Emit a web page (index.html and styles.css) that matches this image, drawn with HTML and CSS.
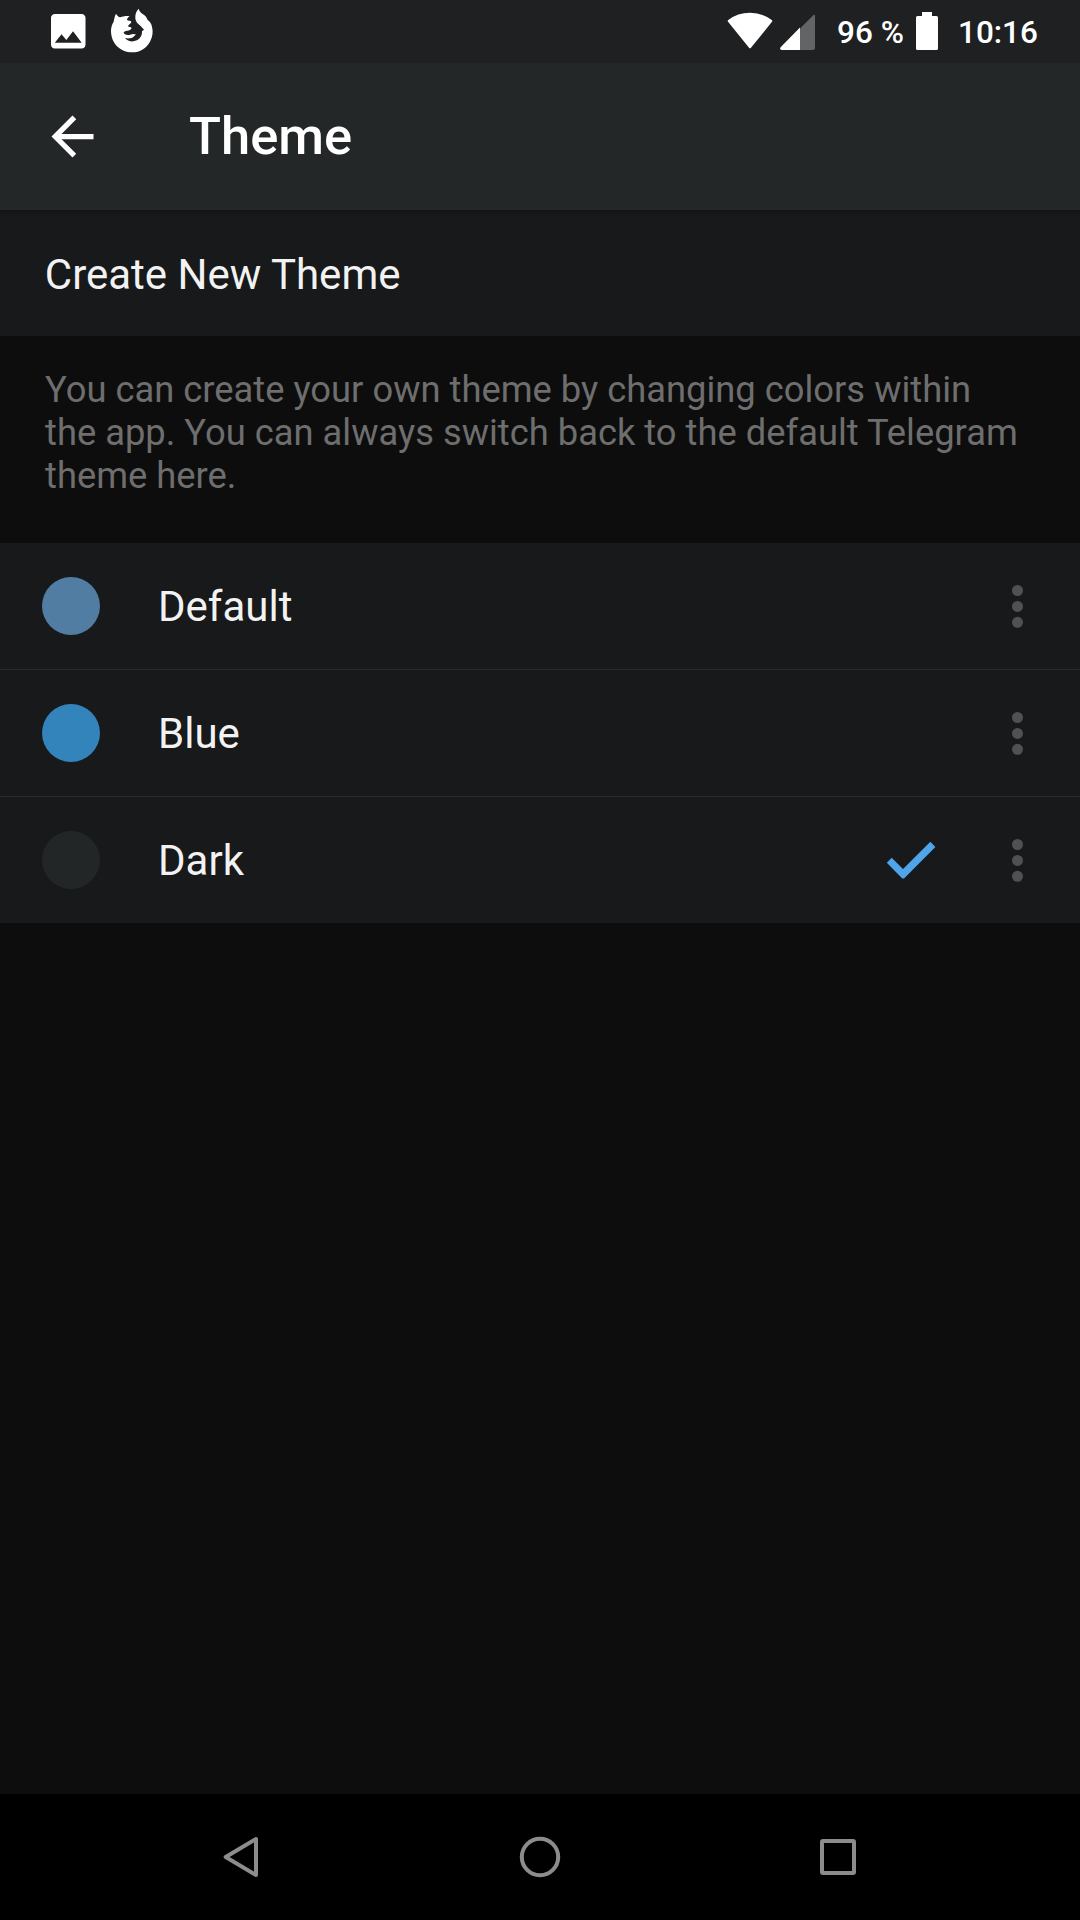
FILE: index.html
```html
<!DOCTYPE html>
<html lang="en">
<head>
<meta charset="utf-8">
<title>Theme</title>
<link rel="stylesheet" href="styles.css">
</head>
<body>
<div class="screen">
  <div class="status-bar">
    <div class="notifications">
      <svg class="icon-image" viewBox="3 3 18 18"><path d="M21 19V5c0-1.100-.9-2-2-2H5c-1.100 0-2 .9-2 2v14c0 1.100.9 2 2 2h14c1.100 0 2-.9 2-2zM8.500 13.500l2.500 3.010L14.500 12l4.500 6H5l3.500-4.500z"/></svg>
      <svg class="icon-firefox" viewBox="210 24 132 135"><path d="M228 41C231 46 235 51 241 52C248 50 258 47 269 49C264 52 261 56 261 60C265 63 272 62 274 65C274 70 266 74 264 78C265 82 273 80 275 84C273 89 268 92 262 92C256 92 250 95 251 99C254 104 262 106 270 104C277 102 284 101 288 104C282 107 281 112 274 114C267 116 261 116 255 114C261 121 270 125 280 124C296 122 307 110 306 94L312 89L304 80C302 78 299 75 295 72C288 67 285 58 286 48C287 38 291 31 296 26C298 33 302 38 308 42C316 46 320 53 323 60C331 66 335 73 336 81C340 95 338 111 330 125C319 145 300 157 277 157C240 157 213 129 213 93C213 82 216 72 221 65C223 56 224 48 228 41Z"/></svg>
    </div>
    <div class="system">
      <svg class="icon-wifi" viewBox="0 0 46 37"><path d="M23 35L2 9Q11 2 23 2T44 9Z"/></svg>
      <svg class="icon-signal" viewBox="0 0 36 36"><path class="signal-off" d="M20 14.500L33 1.500Q35 0 35 2V34Q35 36 33 36H20Z"/><path d="M20 13.500V36H1.500Q-1 35 .8 33Z"/></svg>
      <span class="battery-level">96 %</span>
      <svg class="icon-battery" viewBox="0 0 22 38"><path d="M6 0H16V4H20.500Q22 4 22 5.500V36.500Q22 38 20.500 38H1.500Q0 38 0 36.500V5.500Q0 4 1.500 4H6Z"/></svg>
      <span class="clock">10:16</span>
    </div>
  </div>
  <header class="app-bar">
    <svg class="icon-back" viewBox="0 0 24 24"><path d="M20 11H7.830l5.590-5.590L12 4l-8 8 8 8 1.410-1.410L7.830 13H20v-2z"/></svg>
    <h1 class="title">Theme</h1>
  </header>
  <main class="content">
    <div class="create-row">Create New Theme</div>
    <p class="info">You can create your own theme by changing colors within the app. You can always switch back to the default Telegram theme here.</p>
    <div class="theme-list">
      <div class="theme-row">
        <span class="swatch swatch-default"></span>
        <span class="theme-name">Default</span>
        <svg class="icon-more" viewBox="0 0 11 43"><circle cx="5.500" cy="5.500" r="5.500"/><circle cx="5.500" cy="21.400" r="5.500"/><circle cx="5.500" cy="37.300" r="5.500"/></svg>
      </div>
      <div class="theme-row">
        <span class="swatch swatch-blue"></span>
        <span class="theme-name">Blue</span>
        <svg class="icon-more" viewBox="0 0 11 43"><circle cx="5.500" cy="5.500" r="5.500"/><circle cx="5.500" cy="21.400" r="5.500"/><circle cx="5.500" cy="37.300" r="5.500"/></svg>
      </div>
      <div class="theme-row">
        <span class="swatch swatch-dark"></span>
        <span class="theme-name">Dark</span>
        <svg class="icon-check" viewBox="0 0 48 37"><path d="M-.2 20.700L4.700 15.800L16 27L43.300-.2L48.400 4.900L17 36.600H15.300Z"/></svg>
        <svg class="icon-more" viewBox="0 0 11 43"><circle cx="5.500" cy="5.500" r="5.500"/><circle cx="5.500" cy="21.400" r="5.500"/><circle cx="5.500" cy="37.300" r="5.500"/></svg>
      </div>
    </div>
  </main>
  <nav class="nav-bar">
    <svg class="nav-icon" viewBox="0 0 48 48"><path d="M7.700 24L38 6V42Z"/></svg>
    <svg class="nav-icon" viewBox="0 0 48 48"><circle cx="24" cy="24" r="18.200"/></svg>
    <svg class="nav-icon" viewBox="0 0 48 48"><rect x="8" y="8" width="32" height="32" rx="1"/></svg>
  </nav>
</div>
</body>
</html>
```
FILE: styles.css
```css
* { box-sizing: border-box; }

body {
  margin: 0;
  background: #0d0d0d;
  font-family: Roboto, "Noto Sans", sans-serif;
}

svg {
  display: block;
  flex: none;
  fill: #fff;
  overflow: visible;
}

.screen {
  display: flex;
  flex-direction: column;
  width: 1080px;
  height: 1920px;
  overflow: hidden;
}

.status-bar {
  display: flex;
  flex: none;
  justify-content: space-between;
  height: 63px;
  padding: 0 41px 0 51px;
  background: #1e2022;
  color: #fff;
  font-size: 31.500px;
  font-weight: 500;
  line-height: 66px;
}

.notifications { display: flex; gap: 24px; }
.icon-image { width: 34.500px; height: 34.500px; margin-top: 14px; }
.icon-firefox { width: 44px; height: 45px; margin-top: 8px; }

.system { display: flex; white-space: nowrap; }
.icon-wifi { width: 46px; height: 37px; margin: 12px 7px 0 0; }
.icon-wifi path { stroke: #fff; stroke-width: 2.500px; stroke-linejoin: round; }
.icon-signal { width: 36px; height: 36px; margin: 14px 21px 0 0; }
.signal-off { fill: #636465; }
.battery-level { width: 79px; }
.icon-battery { width: 22px; height: 38px; margin-top: 12px; }
.clock { width: 81px; margin-left: 20px; }

.app-bar {
  display: flex;
  flex: none;
  align-items: center;
  height: 147px;
  padding-left: 41px;
  background: #232728;
}

.icon-back { width: 63px; height: 63px; }

.title {
  margin: 0 0 1px 85px;
  color: #fff;
  font-size: 52.500px;
  font-weight: 500;
  line-height: 62px;
}

.content { flex: 1; }

.create-row {
  height: 126px;
  padding: 2px 44.800px 0;
  background: linear-gradient(#131415, #17191a 6px);
  color: #f2f2f2;
  font-size: 42px;
  line-height: 126px;
}

.info {
  height: 207px;
  margin: 0;
  padding: 32px 55px 0 45px;
  color: #6e6e6e;
  font-size: 36.350px;
  line-height: 43px;
}

.theme-row {
  display: flex;
  align-items: center;
  height: 127px;
  padding: 0 57px 0 42px;
  border-bottom: 1px solid #2a2c2d;
  background: #17191a;
}

.theme-row:last-child { height: 126px; border-bottom: 0; }

.swatch {
  width: 58px;
  height: 58px;
  border-radius: 50%;
}

.swatch-default { background: #527da3; }
.swatch-blue { background: #3384ba; }
.swatch-dark { background: #232627; }

.theme-name {
  flex: 1;
  margin-left: 58px;
  padding-top: 2px;
  color: #f2f2f2;
  font-size: 42px;
  line-height: 50px;
}

.icon-check { width: 48px; height: 37px; margin: 0 77.500px 0 0; fill: #50a5ea; }
.icon-more { width: 11px; height: 43px; margin-top: 1px; fill: #4f5254; }

.nav-bar {
  display: flex;
  flex: none;
  align-items: center;
  justify-content: center;
  gap: 250px;
  height: 126px;
  background: #000;
}

.nav-icon {
  width: 48px;
  height: 48px;
  fill: none;
  stroke: #8c8c8c;
  stroke-width: 4px;
  stroke-linejoin: round;
}
```
